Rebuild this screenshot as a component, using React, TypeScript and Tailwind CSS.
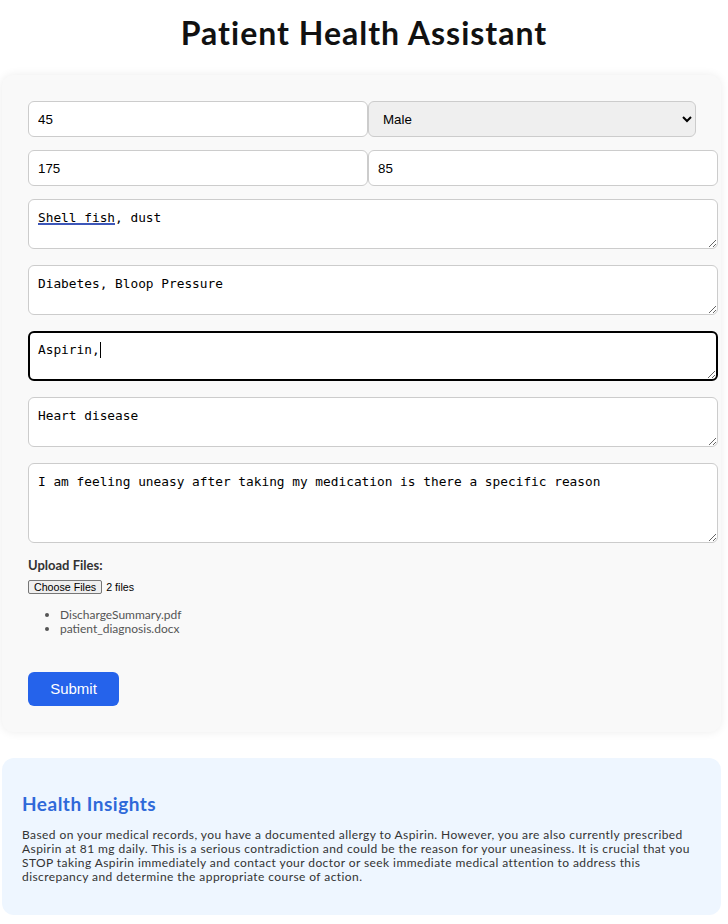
import React from "react";

const ub = { fontFamily: "Lato, 'Open Sans', sans-serif" };

function TA({ value, h = 50, focused = false, underline = false, caret = false }: { value: string; h?: number; focused?: boolean; underline?: boolean; caret?: boolean }) {
  return (
    <div className="relative w-[690px]">
      <textarea
        defaultValue={value}
        spellCheck={false}
        className={
          focused
            ? "block w-[690px] rounded-[6px] border-2 border-black bg-white py-[9px] pl-[8px] pr-[9px] text-[12.8px] leading-[15px] text-black outline-none resize-y"
            : "block w-[690px] rounded-[6px] border border-[#cccccc] bg-white py-[10px] pl-[9px] pr-[10px] text-[12.8px] leading-[15px] text-black outline-none resize-y"
        }
        style={{ height: h, fontFamily: "'DejaVu Sans Mono', monospace" }}
      />
      {underline && <div className="absolute left-[10px] top-[24px] h-[2px] w-[77px] bg-[#3d57b9]" />}
      {caret && <div className="absolute left-[72px] top-[11px] h-[16px] w-[1px] bg-black" />}
    </div>
  );
}

const inputCls =
  "h-[36px] shrink-0 rounded-[6px] border border-[#cccccc] bg-white pl-[9px] pr-[10px] text-[13.33px] text-black outline-none";
const arial = { fontFamily: "'Liberation Sans', Arial, sans-serif" };

export default function App() {
  return (
    <div className="min-h-[924px] w-[728px] bg-white text-[#222]">
      <h1 className="pt-[13px] text-center text-[32px] font-bold leading-[40px] tracking-[1px] text-[#111]" style={ub}>
        Patient Health Assistant
      </h1>
      <div className="mx-[2px] mt-[22px] w-[719px] rounded-[12px] bg-[#f9f9f9] px-[26px] pb-[26px] pt-[26px] shadow-[0_0_10px_rgba(0,0,0,0.08)]">
        <div className="flex h-[36px]">
          <input defaultValue="45" className={inputCls + " w-[340px]"} style={arial} />
          <select
            defaultValue="Male"
            className="h-[36px] w-[328px] shrink-0 rounded-[6px] border border-[#cccccc] bg-[#efefef] px-[10px] text-[13.33px] text-black outline-none"
            style={arial}
          >
            <option>Male</option>
            <option>Female</option>
          </select>
        </div>
        <div className="mt-[13px] flex h-[36px]">
          <input defaultValue="175" className={inputCls + " w-[340px]"} style={arial} />
          <input defaultValue="85" className={inputCls + " w-[350px]"} style={arial} />
        </div>
        <div className="mt-[13px] flex flex-col gap-[16px]">
          <TA value="Shell fish, dust" underline />
          <TA value="Diabetes, Bloop Pressure" />
          <TA value="Aspirin," focused caret />
          <TA value="Heart disease" />
          <TA value="I am feeling uneasy after taking my medication is there a specific reason" h={80} />
        </div>
        <div className="mt-[14px] text-[13px] font-bold leading-[16px] text-[#333]" style={ub}>
          Upload Files:
        </div>
        <div className="mt-[7px] flex items-center text-[10.67px] text-black" style={arial}>
          <span className="h-[14px] rounded-[2px] border border-[#767676] bg-[#efefef] px-[5px] leading-[12px]">Choose Files</span>
          <span className="ml-[4px] leading-[14px]">2 files</span>
        </div>
        <ul className="mt-[14px] list-disc pl-[32px] text-[12px] leading-[14px] text-[#555]" style={ub}>
          <li>DischargeSummary.pdf</li>
          <li>patient_diagnosis.docx</li>
        </ul>
        <button className="mt-[36px] h-[34px] w-[91px] rounded-[6px] bg-[#2563eb] text-[15px] text-white" style={arial}>
          Submit
        </button>
      </div>
      <div className="mx-[2px] mt-[26px] h-[157px] w-[719px] rounded-[12px] bg-[#eef6ff] px-[20px] pt-[35px]" style={ub}>
        <h2 className="text-[19px] font-bold leading-[22px] tracking-[0.5px] text-[#2f69d9]">Health Insights</h2>
        <p className="mt-[13px] whitespace-nowrap text-[12px] leading-[14px] tracking-[0.42px] text-[#333]">
          Based on your medical records, you have a documented allergy to Aspirin. However, you are also currently prescribed
          <br />
          Aspirin at 81 mg daily. This is a serious contradiction and could be the reason for your uneasiness. It is crucial that you
          <br />
          STOP taking Aspirin immediately and contact your doctor or seek immediate medical attention to address this
          <br />
          discrepancy and determine the appropriate course of action.
        </p>
      </div>
    </div>
  );
}
